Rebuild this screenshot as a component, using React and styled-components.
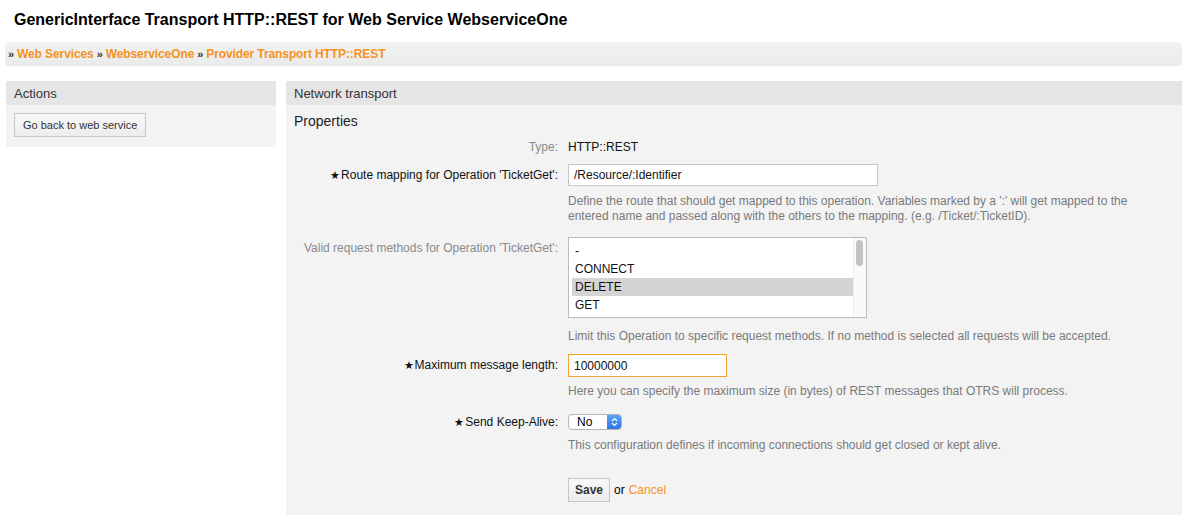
import styled, { createGlobalStyle } from "styled-components";

const GlobalStyle = createGlobalStyle`
  body {
    margin: 0;
    background: #fff;
    font-family: "Liberation Sans", Arial, Helvetica, sans-serif;
    color: #000;
  }
`;

const Page = styled.div`
  width: 1198px;
  height: 520px;
  overflow: hidden;
`;

const Title = styled.h1`
  margin: 0;
  padding: 10px 0 0 14px;
  height: 32px;
  box-sizing: border-box;
  font-size: 16px;
  line-height: 19px;
  font-weight: bold;
`;

const Breadcrumb = styled.div`
  margin: 10px 16px 0 5px;
  height: 24px;
  border-radius: 4px;
  background: linear-gradient(#f1f2f2, #e9eaea);
  display: flex;
  align-items: center;
  padding-left: 3px;
  font-size: 12px;
  font-weight: bold;
  gap: 3px;
  letter-spacing: -0.1px;
`;

const Raquo = styled.span`
  color: #333;
  font-size: 11px;
`;

const Crumb = styled.a`
  color: #f7921c;
  text-decoration: none;
`;

const Columns = styled.div`
  display: grid;
  grid-template-columns: 270px 896px;
  column-gap: 10px;
  margin: 15px 0 0 6px;
  align-items: start;
`;

const Panel = styled.section`
  background: #f3f3f3;
`;

const PanelHeader = styled.div`
  height: 24px;
  background: #e5e5e5;
  color: #333;
  font-size: 13px;
  line-height: 26px;
  padding-left: 8px;
`;

const SideBody = styled.div`
  padding: 8px 8px 10px;
`;

const Button = styled.button`
  height: 24px;
  padding: 0 ${(p) => (p.$bold ? "6px" : "8px")};
  border: 1px solid #c6c6c6;
  background: linear-gradient(#f9f9f9, #ececec);
  font-family: inherit;
  font-size: ${(p) => (p.$bold ? "12px" : "11px")};
  font-weight: ${(p) => (p.$bold ? "bold" : "normal")};
  color: #333;
  cursor: pointer;
`;

const MainBody = styled.div`
  padding: 7px 0 13px 8px;
`;

const Heading = styled.h2`
  margin: 0;
  font-size: 14px;
  font-weight: normal;
  line-height: 18px;
  color: #222;
`;

const Row = styled.div`
  display: grid;
  grid-template-columns: 264px 1fr;
  column-gap: 10px;
  margin-top: ${(p) => p.$top}px;
`;

const Label = styled.label`
  text-align: right;
  font-size: 12px;
  line-height: ${(p) => (p.$short ? "15px" : "22px")};
  color: ${(p) => (p.$muted ? "#8a8a8a" : "#111")};
`;

const Star = styled.span`
  font-size: 11px;
  margin-right: 1px;
`;

const Value = styled.div`
  font-size: 12px;
  line-height: 15px;
  color: #111;
`;

const TextInput = styled.input`
  box-sizing: border-box;
  width: ${(p) => p.$w}px;
  height: ${(p) => p.$h || 22}px;
  border: 1px solid ${(p) => (p.$focus ? "#f7a238" : "#c8c8c8")};
  background: #fff;
  padding: 0 5px;
  font-family: inherit;
  font-size: 12px;
  color: #111;
  outline: none;
  display: block;
`;

const Desc = styled.p`
  margin: ${(p) => p.$top}px 0 0;
  max-width: 590px;
  font-size: 12px;
  line-height: 15px;
  color: #7a7a7a;
`;

const ListBox = styled.div`
  box-sizing: border-box;
  width: 299px;
  height: 81px;
  border: 1px solid #bcbcbc;
  background: #fff;
  padding: 4px 13px 0 3px;
  position: relative;
  overflow: hidden;
`;

const Option = styled.div`
  height: 18px;
  line-height: 19px;
  padding-left: 3px;
  font-size: 12px;
  color: #111;
  background: ${(p) => (p.$selected ? "#d4d4d4" : "transparent")};
`;

const ScrollTrack = styled.div`
  position: absolute;
  top: 0;
  right: 0;
  bottom: 0;
  width: 12px;
  border-left: 1px solid #ececec;
  background: #fafafa;
`;

const ScrollThumb = styled.div`
  margin: 2px 0 0 2px;
  width: 7px;
  height: 26px;
  border-radius: 4px;
  background: #c2c2c2;
`;

const SelectWrap = styled.div`
  height: 22px;
  display: flex;
  align-items: center;
`;

const Select = styled.div`
  box-sizing: border-box;
  width: 54px;
  height: 16px;
  border: 1px solid #b5b5b5;
  border-radius: 4px;
  background: #fff;
  display: flex;
  align-items: stretch;
  overflow: hidden;
  font-size: 12px;
`;

const SelectText = styled.span`
  flex: 1;
  padding-left: 8px;
  line-height: 14px;
`;

const Stepper = styled.span`
  width: 14px;
  background: linear-gradient(#5aa2fb, #2d74e6);
  display: flex;
  align-items: center;
  justify-content: center;
`;

const Actions = styled.div`
  display: flex;
  align-items: center;
  gap: 4px;
  font-size: 12px;
`;

const Cancel = styled.a`
  color: #f7921c;
  text-decoration: none;
`;

const methods = ["-", "CONNECT", "DELETE", "GET"];

export default function App() {
  return (
    <Page>
      <GlobalStyle />
      <Title>GenericInterface Transport HTTP::REST for Web Service WebserviceOne</Title>
      <Breadcrumb>
        <Raquo>»</Raquo>
        <Crumb href="#">Web Services</Crumb>
        <Raquo>»</Raquo>
        <Crumb href="#">WebserviceOne</Crumb>
        <Raquo>»</Raquo>
        <Crumb href="#">Provider Transport HTTP::REST</Crumb>
      </Breadcrumb>
      <Columns>
        <Panel>
          <PanelHeader>Actions</PanelHeader>
          <SideBody>
            <Button>Go back to web service</Button>
          </SideBody>
        </Panel>
        <Panel>
          <PanelHeader>Network transport</PanelHeader>
          <MainBody>
            <Heading>Properties</Heading>
            <Row $top={10}>
              <Label $short $muted>Type:</Label>
              <Value>HTTP::REST</Value>
            </Row>
            <Row $top={9}>
              <Label><Star>★</Star>Route mapping for Operation 'TicketGet':</Label>
              <div>
                <TextInput $w={310} defaultValue="/Resource/:Identifier" />
                <Desc $top={8}>
                  Define the route that should get mapped to this operation. Variables marked by a ':' will get mapped to the entered name and passed along with the others to the mapping. (e.g. /Ticket/:TicketID).
                </Desc>
              </div>
            </Row>
            <Row $top={13}>
              <Label $muted>Valid request methods for Operation 'TicketGet':</Label>
              <div>
                <ListBox>
                  {methods.map((m) => (
                    <Option key={m} $selected={m === "DELETE"}>{m}</Option>
                  ))}
                  <ScrollTrack>
                    <ScrollThumb />
                  </ScrollTrack>
                </ListBox>
                <Desc $top={11}>
                  Limit this Operation to specific request methods. If no method is selected all requests will be accepted.
                </Desc>
              </div>
            </Row>
            <Row $top={10}>
              <Label><Star>★</Star>Maximum message length:</Label>
              <div>
                <TextInput $w={159} $h={23} $focus defaultValue="10000000" />
                <Desc $top={7}>
                  Here you can specify the maximum size (in bytes) of REST messages that OTRS will process.
                </Desc>
              </div>
            </Row>
            <Row $top={12}>
              <Label><Star>★</Star>Send Keep-Alive:</Label>
              <div>
                <SelectWrap>
                  <Select>
                    <SelectText>No</SelectText>
                    <Stepper>
                      <svg width="7" height="10" viewBox="0 0 7 10" fill="none" stroke="#fff" strokeWidth="1.2">
                        <path d="M1 4 L3.5 1.5 L6 4" />
                        <path d="M1 6 L3.5 8.5 L6 6" />
                      </svg>
                    </Stepper>
                  </Select>
                </SelectWrap>
                <Desc $top={5}>
                  This configuration defines if incoming connections should get closed or kept alive.
                </Desc>
              </div>
            </Row>
            <Row $top={25}>
              <span />
              <Actions>
                <Button $bold>Save</Button>
                <span>or</span>
                <Cancel href="#">Cancel</Cancel>
              </Actions>
            </Row>
          </MainBody>
        </Panel>
      </Columns>
    </Page>
  );
}
